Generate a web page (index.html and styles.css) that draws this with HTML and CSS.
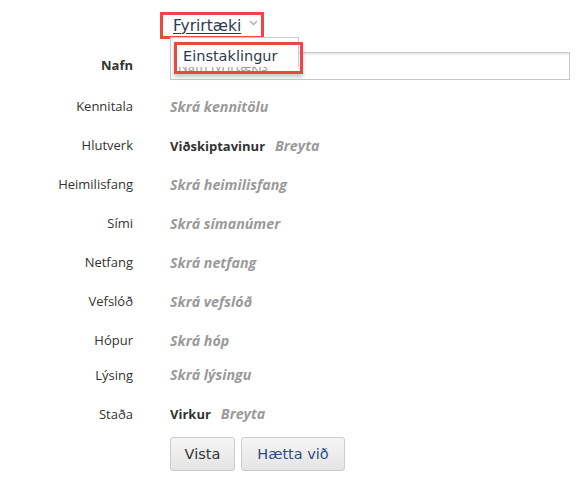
FILE: index.html
```html
<!DOCTYPE html>
<html>
<head>
<meta charset="utf-8">
<link rel="stylesheet" href="styles.css">
</head>
<body>
<div class="page">
  <div class="top">
    <span class="type-select hl"><span class="type-link">Fyrirtæki</span><svg class="chev" width="9" height="6" viewBox="0 0 9 6"><path d="M1 1 L4.5 4.5 L8 1" fill="none" stroke="#b5b5b5" stroke-width="1.6"/></svg></span>
  </div>
  <div class="form">
    <div class="label strong">Nafn</div>
    <div class="value field-wrap">
      <input class="input" type="text" placeholder="Nafn fyrirtækis">
      <div class="menu">
        <div class="menu-item hl">Einstaklingur</div>
      </div>
    </div>

    <div class="label first">Kennitala</div>
    <div class="value first"><span class="empty">Skrá kennitölu</span></div>

    <div class="label">Hlutverk</div>
    <div class="value"><span class="set">Viðskiptavinur</span><span class="empty">Breyta</span></div>

    <div class="label">Heimilisfang</div>
    <div class="value"><span class="empty">Skrá heimilisfang</span></div>

    <div class="label">Sími</div>
    <div class="value"><span class="empty">Skrá símanúmer</span></div>

    <div class="label">Netfang</div>
    <div class="value"><span class="empty">Skrá netfang</span></div>

    <div class="label">Vefslóð</div>
    <div class="value"><span class="empty">Skrá vefslóð</span></div>

    <div class="label">Hópur</div>
    <div class="value"><span class="empty">Skrá hóp</span></div>

    <div class="label short">Lýsing</div>
    <div class="value short"><span class="empty">Skrá lýsingu</span></div>

    <div class="label tall">Staða</div>
    <div class="value tall"><span class="set">Virkur</span><span class="empty">Breyta</span></div>

    <div class="label"></div>
    <div class="buttons">
      <button class="btn">Vista</button>
      <button class="btn btn-cancel">Hætta við</button>
    </div>
  </div>
</div>
</body>
</html>
```
FILE: styles.css
```css
* { box-sizing: border-box; }
html, body { margin: 0; padding: 0; background: #fff; }
body {
  font-family: "Open Sans", "DejaVu Sans", sans-serif;
  font-size: 13px;
  color: #333;
}
.page { width: 586px; height: 485px; padding-top: 12px; }
.top { padding-left: 160px; height: 27px; }
.type-select {
  display: inline-flex;
  align-items: center;
  height: 27px;
  padding: 0 6px 0 13px;
  gap: 8px;
}
.type-link {
  font-family: "DejaVu Sans", Verdana, sans-serif;
  font-size: 15.5px;
  color: #2b3a52;
  text-decoration: underline;
  text-decoration-thickness: 1px;
  text-underline-offset: 2px;
  line-height: 20px;
  margin-top: 1px;
}
.chev { margin-top: -6px; }
.hl { outline: 3px solid #f04545; outline-offset: -3px; }

.form {
  display: grid;
  grid-template-columns: 133px 1fr;
  column-gap: 37px;
  align-items: center;
  padding-right: 16px;
  margin-top: 13px;
}
.label { text-align: right; height: 39px; line-height: 39px; white-space: nowrap; }
.label.strong { font-weight: 700; height: 28px; line-height: 28px; margin-top: -2px; }
.value { height: 39px; line-height: 39px; white-space: nowrap; }
.label.first, .value.first { height: 46px; line-height: 53px; }
.label.short, .value.short { height: 30px; line-height: 30px; }
.label.tall, .value.tall { height: 44px; line-height: 48px; }
.field-wrap { position: relative; height: 28px; line-height: normal; }
.input {
  width: 100%;
  height: 28px;
  border: 1px solid #c8c8c8;
  box-shadow: inset 0 2px 1px rgba(0,0,0,0.08);
  font-family: inherit;
  font-size: 13px;
  padding: 4px 7px;
  outline: none;
}
.input::placeholder { color: #999; }
.menu {
  position: absolute;
  left: 0;
  top: -15px;
  width: 129px;
  height: 30px;
  background: #fff;
  border: 1px solid #ccc;
  border-bottom: none;
}
.menu-item {
  margin: 4px 0 0 3px;
  height: 32px;
  line-height: 28px;
  padding-left: 9px;
  font-family: "DejaVu Sans", Verdana, sans-serif;
  font-size: 14.5px;
  color: #2b3a52;
  width: 129px;
  box-shadow: 0 3px 4px rgba(0,0,0,0.22);
}
.empty { font-style: italic; font-weight: 700; font-size: 14.25px; color: #9a9a9a; }
.set { font-weight: 700; color: #333; margin-right: 10px; }
.buttons { display: flex; gap: 6px; }
.btn {
  font-family: "DejaVu Sans", Verdana, sans-serif;
  font-size: 14.5px;
  color: #333;
  width: 65px;
  height: 34px;
  padding: 0;
  border: 1px solid #ccc;
  border-radius: 3px;
  background: linear-gradient(#f5f5f5, #e5e5e5);
}
.btn-cancel { color: #2c4f7c; width: 104px; }
```
